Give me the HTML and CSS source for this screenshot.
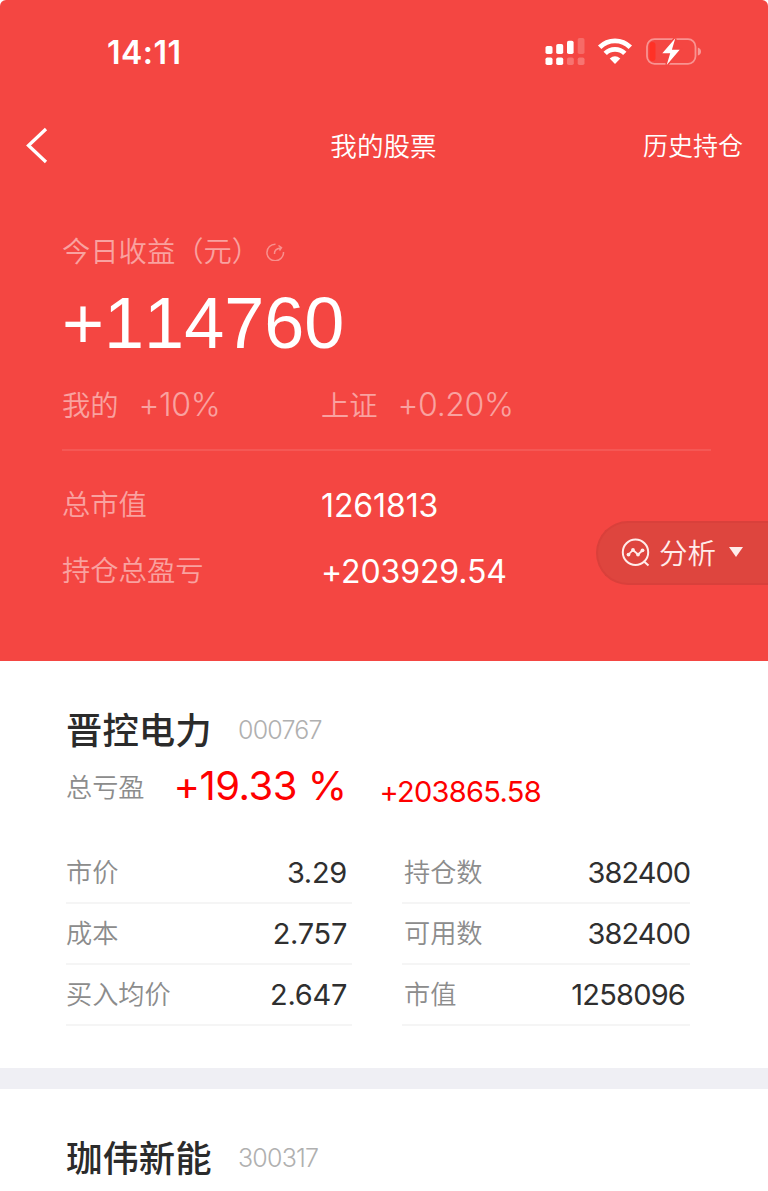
FILE: index.html
```
<!DOCTYPE html>
<html lang="zh-CN">
<head>
    <meta charset="UTF-8">
    <meta name="viewport" content="width=device-width, initial-scale=1.0">
    <title>我的股票</title>
    <link rel="stylesheet" href="styles.css">
</head>
<body>
    <div class="hero">
        <div class="status-bar">
            <span class="time">14:11</span>
            <svg class="status-icons" width="160" height="32" viewBox="0 0 160 32">
                <!-- signal -->
                <g fill="#fff">
                    <rect x="5.5" y="10" width="7" height="8" rx="1.8"/>
                    <rect x="16.2" y="8" width="7" height="10" rx="1.8"/>
                    <rect x="27" y="4.7" width="6.6" height="13.3" rx="1.8"/>
                    <rect x="5.5" y="21.5" width="7" height="7.5" rx="1.8"/>
                    <rect x="16.2" y="21.5" width="7" height="7.5" rx="1.8"/>
                    <rect x="27" y="21.5" width="6.8" height="7.5" rx="1.8" opacity=".25"/>
                    <rect x="37.7" y="21.5" width="6.8" height="7.5" rx="1.8" opacity=".25"/>
                    <rect x="37.7" y="2" width="6.8" height="16" rx="1.8" opacity=".2"/>
                </g>
                <!-- wifi -->
                <g fill="none" stroke="#fff" stroke-width="4.8">
                    <path d="M59.7 11.2 A21.5 21.5 0 0 1 90.3 11.2"/>
                    <path d="M65.2 17.4 A14 14 0 0 1 84.8 17.4"/>
                </g>
                <path d="M75 28 L69.7 22.6 Q75 18 80.3 22.6 Z" fill="#fff"/>
                <!-- battery -->
                <rect x="107" y="3.2" width="48.5" height="24.6" rx="7.5" fill="none" stroke="#fff" stroke-opacity=".42" stroke-width="1.8"/>
                <rect x="109.5" y="6" width="6" height="19" rx="3" fill="#ff3126"/>
                <path d="M157.8 11.5 Q161 12.5 161 15.5 Q161 18.5 157.8 19.5 Z" fill="#fff" opacity=".45"/>
                <path d="M135.3 2.2 L122.3 17.2 H130.2 L126.7 29 L139.7 13.7 H131.9 Z" fill="#fff" stroke="#f44642" stroke-width="3" paint-order="stroke"/>
            </svg>
        </div>

        <div class="nav">
            <svg class="back" width="24" height="38" viewBox="0 0 24 38">
                <path d="M22 3 L4.5 19.5 L22 36" fill="none" stroke="#fff" stroke-width="3.3"/>
            </svg>
            <span class="nav-title">我的股票</span>
            <span class="nav-link">历史持仓</span>
        </div>

        <div class="summary">
            <div class="today">
                <span class="cjk">今日收益（元）</span>
                <svg width="20" height="20" viewBox="0 0 20 20" fill="none" stroke="#fff" stroke-opacity=".4" stroke-width="1.5">
                    <path d="M10.5 3.2 A8.3 8.3 0 1 0 18.5 11"/>
                    <path d="M9.5 13 Q9 8 15.5 7 M13.5 4.5 L16.5 6.7 L14.5 9.5"/>
                </svg>
            </div>
            <div class="profit">+114760</div>
            <div class="rates">
                <span class="rate"><span class="cjk">我的</span><span class="num">+10%</span></span>
                <span class="rate"><span class="cjk">上证</span><span class="num">+0.20%</span></span>
            </div>
            <div class="total">
                <span class="cjk">总市值</span>
                <span class="num">1261813</span>
            </div>
            <div class="total">
                <span class="cjk">持仓总盈亏</span>
                <span class="num">+203929.54</span>
            </div>
        </div>

        <div class="analysis">
            <svg width="30" height="30" viewBox="0 0 30 30" fill="none" stroke="#ffecea" stroke-width="2">
                <circle cx="14.5" cy="14.3" r="12.7"/>
                <path d="M22.5 23 L27.5 27.5"/>
                <path d="M7.5 16.5 L12 12 L17 16.5 L21.5 12.5" stroke-width="1.7"/>
                <g fill="#ffecea" stroke="none">
                    <circle cx="7.5" cy="16.6" r="1.9"/>
                    <circle cx="12" cy="12" r="1.9"/>
                    <circle cx="17" cy="16.6" r="1.9"/>
                    <circle cx="21.5" cy="12.3" r="1.9"/>
                </g>
            </svg>
            <span class="cjk">分析</span>
            <i class="caret"></i>
        </div>
    </div>

    <div class="stock">
        <div class="stock-head">
            <span class="name">晋控电力</span>
            <span class="code">000767</span>
        </div>
        <div class="stock-gain">
            <span class="label">总亏盈</span>
            <span class="percent">+19.33 %</span>
            <span class="amount">+203865.58</span>
        </div>
        <div class="detail">
            <div class="cell"><span class="label">市价</span><span class="value">3.29</span></div>
            <div class="cell"><span class="label">持仓数</span><span class="value">382400</span></div>
            <div class="cell"><span class="label">成本</span><span class="value">2.757</span></div>
            <div class="cell"><span class="label">可用数</span><span class="value">382400</span></div>
            <div class="cell"><span class="label">买入均价</span><span class="value">2.647</span></div>
            <div class="cell"><span class="label">市值</span><span class="value market">1258096</span></div>
        </div>
    </div>

    <div class="stock">
        <div class="stock-head">
            <span class="name">珈伟新能</span>
            <span class="code">300317</span>
        </div>
    </div>
</body>
</html>
```
FILE: styles.css
```
* {
    box-sizing: border-box;
}

body {
    margin: 0;
    height: 1191px;
    overflow: hidden;
    background: #fff;
    font-family: Inter, "Noto Sans CJK SC", sans-serif;
    font-weight: 350;
    white-space: nowrap;
}

.hero {
    position: relative;
    height: 661px;
    background: #f44642;
    color: #fff;
    border-radius: 6px 6px 0 0;
}

.status-bar {
    display: flex;
    align-items: center;
    justify-content: space-between;
    height: 104px;
    padding: 0 68px 0 107px;
}

.status-icons {
    overflow: visible;
}

.time {
    font-size: 32px;
    font-weight: 600;
    letter-spacing: 0.5px;
}

.nav {
    display: grid;
    grid-template-columns: 1fr auto 1fr;
    align-items: center;
    height: 82px;
    padding: 0 25px 0 24px;
}

.nav-title {
    padding-bottom: 2px;
    font-size: 26.6px;
}

.nav-link {
    justify-self: end;
    padding-bottom: 2px;
    font-size: 25px;
}

.cjk {
    padding-bottom: 4px;
}

.summary {
    padding: 42px 57px 0 62px;
    font-size: 28.3px;
    color: rgba(255, 255, 255, 0.5);
}

.today {
    display: flex;
    align-items: center;
    gap: 5px;
    height: 46px;
}

.profit {
    margin-top: 6px;
    height: 84px;
    line-height: 86px;
    font-family: "Liberation Sans", sans-serif;
    font-size: 72px;
    font-weight: 400;
    font-kerning: none;
    color: #fff;
}

.rates {
    display: flex;
    align-items: center;
    height: 87px;
    padding-bottom: 2px;
    margin-bottom: 21px;
    border-bottom: 2px solid rgba(255, 255, 255, 0.1);
}

.rate {
    display: flex;
    align-items: center;
    gap: 20px;
    width: 259px;
}

.num {
    font-size: 32px;
    letter-spacing: -0.4px;
}

.rate .num {
    padding-bottom: 2px;
}

.total {
    display: grid;
    grid-template-columns: 259px 1fr;
    align-items: center;
    height: 66px;
}

.total .cjk {
    padding-bottom: 6px;
}

.total .num {
    color: #fff;
    font-weight: 400;
    letter-spacing: -0.1px;
}

.analysis {
    position: absolute;
    top: 521px;
    right: 0;
    display: flex;
    align-items: center;
    width: 172px;
    height: 64px;
    padding-left: 23px;
    border: 2px solid #d9403b;
    border-right: 0;
    border-radius: 32px 0 0 32px;
    background: #de453e;
    color: #ffecea;
    font-size: 28.5px;
}

.analysis span {
    margin-left: 8px;
}

.caret {
    margin: 0 0 2px 13px;
    border: 7px solid transparent;
    border-top: 10px solid #ffecea;
    border-bottom: 0;
}

.stock {
    padding: 47px 78px 42px 66px;
    border-bottom: 21px solid #efeff4;
}

.stock-head {
    display: flex;
    align-items: center;
    height: 44px;
}

.name {
    width: 172px;
    padding-bottom: 4px;
    font-size: 36.4px;
    font-weight: 500;
    color: #2b2b2b;
}

.code {
    font-size: 25px;
    letter-spacing: -0.8px;
    color: #b0b0b0;
}

.stock-gain {
    display: flex;
    align-items: center;
    height: 46px;
    margin-top: 12px;
}

.label {
    padding-bottom: 2px;
    font-size: 26.2px;
    color: #8c8c8c;
}

.percent {
    margin-left: 29px;
    padding-bottom: 3px;
    font-size: 40px;
    font-weight: 400;
    letter-spacing: -0.5px;
    color: #fe0000;
}

.amount {
    margin-left: 33px;
    padding-top: 9px;
    font-size: 29px;
    font-weight: 400;
    letter-spacing: -0.7px;
    color: #fe0000;
}

.detail {
    display: grid;
    grid-template-columns: 286px 288px;
    column-gap: 50px;
    margin-top: 33px;
}

.cell {
    display: flex;
    align-items: center;
    justify-content: space-between;
    height: 61px;
    padding-right: 5px;
    border-bottom: 2px solid #f5f5f5;
}

.cell:nth-child(even) {
    padding: 0 0 0 2px;
}

.cell .label {
    padding-bottom: 4px;
}

.value {
    font-size: 29px;
    font-weight: 400;
    letter-spacing: -0.3px;
    color: #2f2f2f;
}

.cell:nth-child(even) .value {
    letter-spacing: -1px;
}

.cell:nth-child(even) .market {
    margin-right: 5px;
    letter-spacing: -0.8px;
}
```
